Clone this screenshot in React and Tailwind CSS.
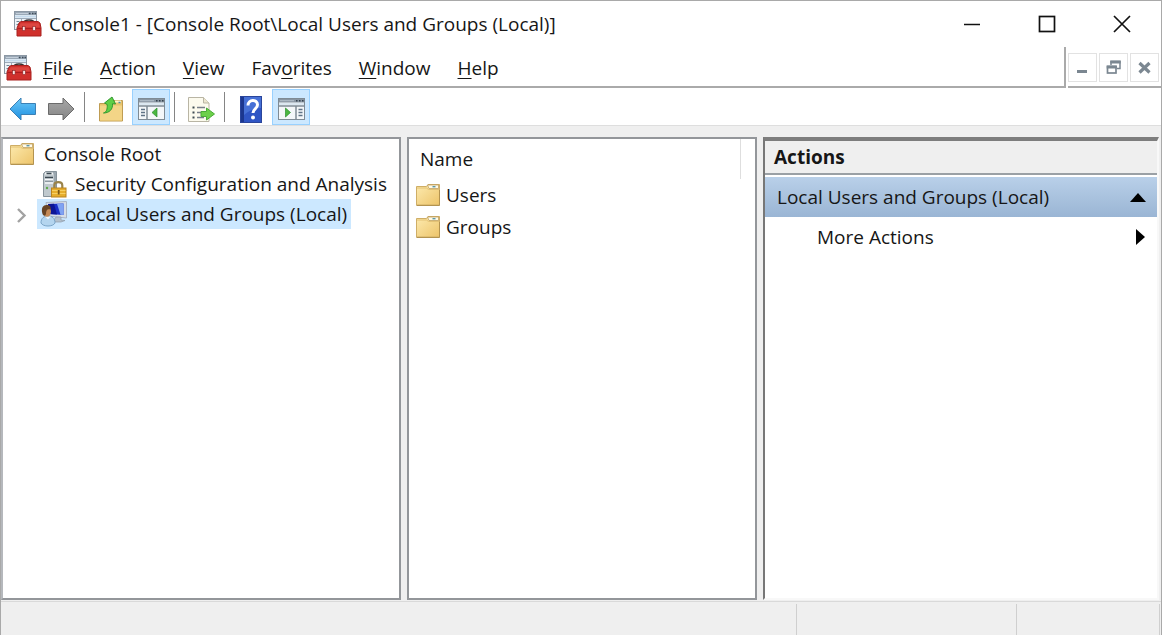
import React from "react";

function ConsoleIcon({ className }) {
  return (
    <svg className={className} width="28" height="28" viewBox="0 0 28 28" aria-hidden="true">
      <rect x=".5" y="1.500" width="22" height="18" fill="#eef2f6" stroke="#8c98a4" />
      <rect x="1" y="2" width="21" height="3" fill="#9aa8b6" />
      <path d="M2 3.500h12" stroke="#c3ced9" />
      <path d="M15 3.500h1.500M18 3.500h1.500M20.500 3.500h1.500" stroke="#3f4c59" strokeWidth="1.500" />
      <path d="M1 6.500h21" stroke="#c6dcee" strokeWidth="2" />
      <path d="M1 8.500h21M7.500 9v10" stroke="#9cabba" />
      <path d="M2.500 11.500h3M2.500 14.500h3" stroke="#6f8190" />
      <path d="M9.500 14c0-3.600 3-4 5.500-4s5.500 .4 5.500 4" fill="none" stroke="#3a3434" strokeWidth="1.700" />
      <path d="M5 13l2-1.500h17L26 13l1 5v8H3v-8z" fill="#d0302c" stroke="#a9211f" />
      <path d="M6.500 13.200h18.300l1 4H5z" fill="#dd4640" />
      <path d="M3.500 18.500h23" stroke="#ab1f1f" />
      <rect x="8.500" y="16.500" width="2.600" height="4" fill="#f6e6e4" stroke="#8b2020" strokeWidth=".6" />
      <rect x="18.800" y="16.500" width="2.600" height="4" fill="#f6e6e4" stroke="#8b2020" strokeWidth=".6" />
    </svg>
  );
}

function Folder() {
  return (
    <svg className="shrink-0" width="24" height="22" viewBox="0 0 24 22" aria-hidden="true">
      <defs>
        <linearGradient id="folder" x1="0" y1="0" x2="1" y2="1">
          <stop offset="0" stopColor="#fdebb0" />
          <stop offset="1" stopColor="#edc46a" />
        </linearGradient>
      </defs>
      <path d="M.5 2.500h10l1.500-2h11.500v20.500H.5z" fill="url(#folder)" stroke="#cfae66" />
      <path d="M11.500 1h11v3.500h-9.500z" fill="#fffbe8" stroke="#b79a5c" strokeWidth=".7" />
      <path d="M16.500 2.700h3" stroke="#5d97a8" strokeWidth="1.400" />
      <path d="M1 4h9.500l2 1.500H23" fill="none" stroke="#e3c275" />
      <path d="M.5 21.500h23V6" fill="none" stroke="#b39350" />
    </svg>
  );
}

function Server() {
  return (
    <svg className="shrink-0" width="24" height="27" viewBox="0 0 24 27" aria-hidden="true">
      <path d="M.5 2.500l2-2h11v25H.5z" fill="#9ba7af" stroke="#87939b" />
      <path d="M1 2.500h10V25H1z" fill="#c0c9ce" />
      <path d="M2 2.500h8" stroke="#f6f8f9" strokeWidth="2" />
      <path d="M3.500 2.500h5M2 6.500h8" stroke="#3b4851" strokeWidth="1.500" />
      <path d="M2 8.500h8M2 12h8" stroke="#f5f8fa" strokeWidth="1.600" />
      <path d="M2 10.300h8" stroke="#7f8c95" />
      <circle cx="4" cy="17" r="1.200" fill="#5daa48" />
      <path d="M11.300 18v-3.500c0-4.400 8-4.400 8 0V18" fill="none" stroke="#9a834a" strokeWidth="2.200" />
      <rect x="8.500" y="17" width="14.500" height="9" fill="#e6ae2e" stroke="#b98420" />
      <path d="M9 19.500h13.500M9 22.500h13.500" stroke="#f6cf62" />
      <path d="M15.700 19v4.500" stroke="#795616" strokeWidth="1.800" />
    </svg>
  );
}

function UsersIcon() {
  return (
    <svg className="shrink-0" width="28" height="26" viewBox="0 0 28 26" aria-hidden="true">
      <path d="M6 1.500L26.500.5V17L8 15z" fill="#d6dde6" stroke="#a9b4c4" />
      <path d="M8 3l15.500-.5V14L9 13z" fill="#1a2fc6" />
      <path d="M17 2.700l6.500-.2V14l-3-.2z" fill="#7fa3f2" />
      <path d="M8 3l6-.2 3 10.700-8-.5z" fill="#0c1596" />
      <path d="M16 16h5v3l4 .5-4 1.500h-6l-1-2z" fill="#b4c1cd" stroke="#8f9cab" strokeWidth=".7" />
      <path d="M1 22c0-5 3-7 7-7s7 2 7 7c-2 4-12 4-14 0z" fill="#b4d5ef" stroke="#7ba5c8" />
      <path d="M5 15.500l3 3 3-3" fill="#eef7fc" />
      <ellipse cx="7" cy="10.500" rx="4" ry="5.200" fill="#c48a58" />
      <path d="M2.500 13C.5 6 4 3.500 7 4c2.500 0 4.500 2 3.500 4.500-3-1-4.500 0-4.500 4.500-1 2.500-2.500 2-3.500 0z" fill="#684425" />
    </svg>
  );
}

function Arrow({ forward }) {
  return (
    <svg width="28" height="24" viewBox="0 0 28 24" aria-hidden="true">
      <defs>
        <linearGradient id="back" x1="0" y1="0" x2="0" y2="1">
          <stop offset="0" stopColor="#6cc8f8" />
          <stop offset="1" stopColor="#1e8fe0" />
        </linearGradient>
        <linearGradient id="forward" x1="0" y1="0" x2="0" y2="1">
          <stop offset="0" stopColor="#a8a8a8" />
          <stop offset="1" stopColor="#858585" />
        </linearGradient>
      </defs>
      {forward ? (
        <path d="M27 12L16 1v5.500H1.500v11H16V23z" fill="url(#forward)" stroke="#6b6b6b" />
      ) : (
        <path d="M1 12L12 1v5.500h14.500v11H12V23z" fill="url(#back)" stroke="#3b80b5" />
      )}
    </svg>
  );
}

function FolderUp() {
  return (
    <svg width="24" height="26" viewBox="0 0 24 26" aria-hidden="true">
      <path d="M.5 7.500h9l2-3h12v20.500H.5z" fill="#e9c46c" stroke="#bf9c52" />
      <path d="M1 9.500h22V24.500H1z" fill="#f3d587" />
      <path d="M16 5.500h6" stroke="#fff5cb" strokeWidth="2" />
      <path d="M19.500 6.500h2" stroke="#4d93a8" strokeWidth="1.500" />
      <path d="M4.500 17c3-1 4-3.500 3.700-8.500L5.500 7 13 1l3.500 7-3-.3c.5 5.500-3 9.300-9 9.300z" fill="#5fce45" stroke="#329a31" />
    </svg>
  );
}

function PanelIcon({ right }) {
  return (
    <svg width="27" height="22" viewBox="0 0 27 22" aria-hidden="true">
      <rect x=".5" y=".5" width="26" height="21" fill="#f4f7f9" stroke="#7f8b95" />
      <path d="M1 1h25v3.500H1z" fill="#8996a3" />
      <path d="M2 2.700h14" stroke="#b3c0cb" />
      <path d="M18 2.700h1.500M21 2.700h1.500M24 2.700h1.500" stroke="#35424e" strokeWidth="1.500" />
      <path d="M1 6h25" stroke="#dce8f1" strokeWidth="2" />
      <path d="M1 8h25" stroke="#7f8b95" strokeWidth="1.500" />
      {right ? (
        <>
          <path d="M18 8v13" stroke="#7f8b95" strokeWidth="1.500" />
          <path d="M20.500 11.500h4M20.500 14.500h4M20.500 17.500h4" stroke="#5f7386" strokeWidth="1.500" />
          <path d="M7.500 10v9l5-4.500z" fill="#4ab73f" stroke="#2c8e30" strokeWidth=".7" />
        </>
      ) : (
        <>
          <path d="M9 8v13" stroke="#7f8b95" strokeWidth="1.500" />
          <path d="M3 11.500h4M3 14.500h4M3 17.500h4" stroke="#5f7386" strokeWidth="1.500" />
          <path d="M19 10v9l-5-4.500z" fill="#4ab73f" stroke="#2c8e30" strokeWidth=".7" />
        </>
      )}
    </svg>
  );
}

function ExportIcon() {
  return (
    <svg width="27" height="27" viewBox="0 0 27 27" aria-hidden="true">
      <path d="M.5 1.500h15l5.500 5.500v18.500H.5z" fill="#fcfaee" stroke="#b9b5a4" />
      <path d="M15.500 1.500v5.500h5.500" fill="#ece6cf" stroke="#b9b5a4" />
      <path d="M4.500 11.500h2M4.500 16.500h2M4.500 21.500h2" stroke="#3f4b52" strokeWidth="1.800" />
      <path d="M9 11.500h8M9 16.500h5M9 21.500h7" stroke="#777e89" strokeWidth="1.500" />
      <path d="M13 15.500h5.500v-3.500l8 6-8 6v-3.500H13z" fill="#6dd04a" stroke="#4bab38" />
    </svg>
  );
}

function HelpIcon() {
  return (
    <svg width="22" height="27" viewBox="0 0 22 27" aria-hidden="true">
      <rect x=".5" y=".5" width="21" height="26" fill="#2f55c4" stroke="#2a459b" />
      <path d="M1 1h3v25H1z" fill="#1c378f" />
      <path d="M4 1h17v11C14 12 9 15 4 19z" fill="#4670d6" />
      <path d="M8 9.500c0-6.500 9.500-6.500 9.500-.8 0 4.300-4.500 4-4.500 8.300" fill="none" stroke="#fff" strokeWidth="3" />
      <circle cx="13" cy="21.500" r="2" fill="#fff" />
    </svg>
  );
}

function ToolButton({ label, active, children }) {
  return (
    <button
      type="button"
      aria-label={label}
      className={
        active
          ? "flex h-9 w-[38px] items-center justify-center border border-[#99d1ff] bg-[#cce8ff] pt-1"
          : "flex h-9 w-[38px] items-center justify-center pt-1"
      }
    >
      {children}
    </button>
  );
}

const Divider = () => <span className="mr-[7px] ml-1 h-[30px] w-px bg-[#858585]" />;

const menus = [
  ["", "F", "ile"],
  ["", "A", "ction"],
  ["", "V", "iew"],
  ["Fav", "o", "rites"],
  ["", "W", "indow"],
  ["", "H", "elp"],
];

function MdiButton({ label, children }) {
  return (
    <button type="button" aria-label={label} className="flex size-[29px] items-center justify-center border border-[#e2e2e2] bg-white">
      <svg width="15" height="15" viewBox="0 0 15 15" fill="none" stroke="#7b8791" aria-hidden="true">
        {children}
      </svg>
    </button>
  );
}

function CaptionButton({ label, children }) {
  return (
    <button type="button" aria-label={label} className="flex h-full w-[75px] items-center justify-center">
      <svg width="18" height="18" viewBox="0 0 18 18" fill="none" stroke="#111" aria-hidden="true">
        {children}
      </svg>
    </button>
  );
}

export default function App() {
  return (
    <div className="flex min-h-screen flex-col border-x border-t border-[#a9a9a9] bg-[#efefef] font-['Open_Sans','Noto_Sans',sans-serif] text-[19px] leading-[30px] text-[#161616]">
      <header className="flex h-[46px] items-center bg-white pr-[2px] pl-[13px]">
        <ConsoleIcon className="shrink-0" />
        <h1 className="ml-[7px] flex-1 whitespace-nowrap">Console1 - [Console Root\Local Users and Groups (Local)]</h1>
        <CaptionButton label="Minimize"><path d="M1 9.500h16" strokeWidth="1.500" /></CaptionButton>
        <CaptionButton label="Maximize"><rect x="1.500" y="1.500" width="15" height="15" strokeWidth="1.700" /></CaptionButton>
        <CaptionButton label="Close"><path d="M1 1l16 16M17 1L1 17" strokeWidth="1.700" /></CaptionButton>
      </header>

      <div className="flex h-[41px] bg-white">
        <div className="flex flex-1 items-center border-r-2 border-b-2 border-[#aaaaaa] pt-[2px] pl-[3px]">
          <ConsoleIcon className="shrink-0" />
          <nav className="ml-[11px] flex gap-[27px]">
            {menus.map(([before, key, after]) => (
              <button type="button" key={key}>
                {before}
                <span className="underline decoration-1 underline-offset-[3px]">{key}</span>
                {after}
              </button>
            ))}
          </nav>
        </div>
        <div className="ml-[2px] flex items-center gap-[2px] border-b-2 border-[#aaaaaa] pt-[2px] pr-[2px]">
          <MdiButton label="Minimize document"><path d="M2 11.500h10" strokeWidth="3" /></MdiButton>
          <MdiButton label="Restore document">
            <path d="M5 5V1.500h9v7H11" strokeWidth="1.500" />
            <path d="M4.300 2h10.400M.7 7h10.100" strokeWidth="2.800" />
            <rect x="1.500" y="6.500" width="8.500" height="6.500" strokeWidth="1.700" />
          </MdiButton>
          <MdiButton label="Close document"><path d="M2.500 3l10 9.500M12.500 3l-10 9.500" strokeWidth="3.200" /></MdiButton>
        </div>
      </div>

      <div className="flex h-[38px] items-end border-b border-[#dedede] bg-white pl-[3px]">
        <div className="flex items-center">
          <ToolButton label="Back"><Arrow /></ToolButton>
          <ToolButton label="Forward"><Arrow forward /></ToolButton>
          <Divider />
          <ToolButton label="Up one level"><FolderUp /></ToolButton>
          <span className="w-[2px]" />
          <ToolButton label="Show or hide console tree" active><PanelIcon /></ToolButton>
          <Divider />
          <ToolButton label="Export list"><ExportIcon /></ToolButton>
          <Divider />
          <ToolButton label="Help"><HelpIcon /></ToolButton>
          <span className="w-[2px]" />
          <ToolButton label="Show or hide action pane" active><PanelIcon right /></ToolButton>
        </div>
      </div>

      <main className="grid flex-1 grid-cols-[400px_350px_minmax(0,1fr)] gap-[6px] pt-[11px] pr-[2px] pb-px">
        <section aria-label="Console tree" className="border-2 border-[#93969a] border-l-[#b5b8bc] bg-white">
          <ul className="whitespace-nowrap">
            <li>
              <div className="flex h-[30px] items-center gap-[10px] pl-[7px]"><Folder />Console Root</div>
              <ul>
                <li className="flex h-[30px] items-center gap-2 pl-10"><Server />Security Configuration and Analysis</li>
                <li className="flex h-[30px] items-center pl-3">
                  <button type="button" aria-label="Expand" className="mr-[9px] w-[13px]">
                    <svg width="13" height="18" viewBox="0 0 13 18" fill="none" stroke="#a2a2a2" strokeWidth="2.400" aria-hidden="true"><path d="M3 4l6.500 6.500L3 17" /></svg>
                  </button>
                  <button type="button" aria-pressed="true" className="flex h-[30px] items-center gap-[7px] bg-[#cce8ff] pr-1 pl-[3px]">
                    <UsersIcon />Local Users and Groups (Local)
                  </button>
                </li>
              </ul>
            </li>
          </ul>
        </section>

        <section aria-label="Items" className="border-2 border-[#93969a] bg-white">
          <table className="w-full text-left">
            <thead>
              <tr className="h-10">
                <th className="w-[331px] border-r border-[#dedede] py-0 pl-[11px] font-normal">Name</th>
                <th aria-hidden="true" />
              </tr>
            </thead>
            <tbody>
              {["Users", "Groups"].map((name) => (
                <tr key={name} className="h-8">
                  <td colSpan="2" className="py-0 pl-[7px]">
                    <div className="flex items-center gap-[6px]"><Folder />{name}</div>
                  </td>
                </tr>
              ))}
            </tbody>
          </table>
        </section>

        <aside className="border-t-4 border-r-2 border-b-2 border-l-2 border-t-[#7d7d7d] border-r-[#f8f8f8] border-b-[#f8f8f8] border-l-[#777777] bg-white">
          <h2 className="h-[34px] border-b-2 border-[#9aa0a5] bg-[#efefef] pt-px pl-[9px] font-bold">Actions</h2>
          <button type="button" className="mt-[2px] flex h-10 w-full items-center justify-between bg-linear-to-b from-[#b9d0e9] to-[#9ab5d4] pr-[11px] pl-3">
            Local Users and Groups (Local)
            <svg width="16" height="9" viewBox="0 0 16 9" aria-hidden="true"><path d="M0 9L8 0l8 9z" /></svg>
          </button>
          <button type="button" className="flex h-10 w-full items-center justify-between pr-3 pl-[52px]">
            More Actions
            <svg width="9" height="16" viewBox="0 0 9 16" aria-hidden="true"><path d="M0 0l9 8-9 8z" /></svg>
          </button>
        </aside>
      </main>

      <footer className="flex h-[34px] border-t border-[#d9d9d9] pt-[2px] pr-[1px]">
        <div className="flex-1 border-r border-[#cfcfcf]" />
        <div className="w-[220px] border-r border-[#cfcfcf]" />
        <div className="w-[143px] border-r border-[#cfcfcf]" />
      </footer>
    </div>
  );
}
